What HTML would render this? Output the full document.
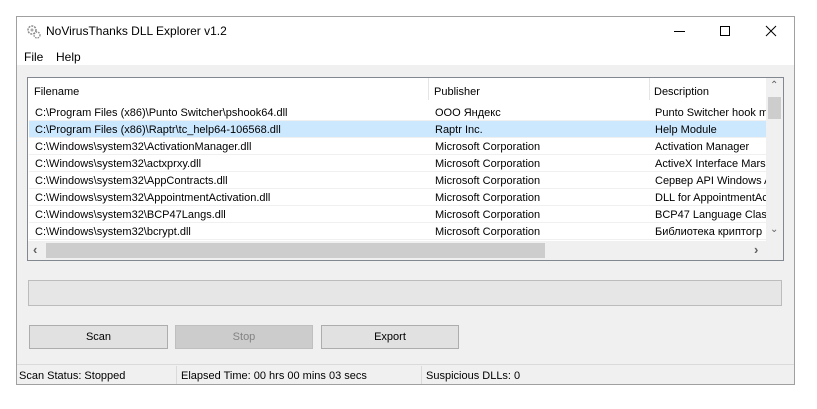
<!DOCTYPE html>
<html><head><style>
*{margin:0;padding:0;box-sizing:border-box}
body{width:817px;height:409px;background:#fff;font-family:"Liberation Sans","Noto Sans CJK SC",sans-serif;font-size:11px;color:#000;position:relative;overflow:hidden}
.a{position:absolute;white-space:nowrap}
.row{position:absolute;left:1px;width:737px;height:17px;border-bottom:1px solid #f0f0f0}
.row span{position:absolute;top:3px}
.btn{position:absolute;top:325px;height:24px;border:1px solid #adadad;background:#e1e1e1;text-align:center;line-height:23px}
</style></head><body>
<div class="a" style="left:16px;top:16px;width:779px;height:369px;border:1px solid #a0a0a0;background:#f0f0f0"></div>
<div class="a" style="left:17px;top:17px;width:777px;height:48px;background:#fff"></div>
<svg class="a" style="left:26px;top:24px" width="16" height="16" viewBox="0 0 16 16"><circle cx="6" cy="6" r="4" fill="none" stroke="#888" stroke-width="1.5" stroke-dasharray="2 1"/><circle cx="6" cy="6" r="1.5" fill="#aaa"/><circle cx="11" cy="11" r="3" fill="none" stroke="#888" stroke-width="1.3" stroke-dasharray="1.5 1"/></svg>
<div class="a" style="left:46px;top:24px;font-size:12px">NoVirusThanks DLL Explorer v1.2</div>
<div class="a" style="left:674px;top:31px;width:11px;height:1px;background:#000"></div>
<div class="a" style="left:720px;top:26px;width:10px;height:10px;border:1px solid #000"></div>
<svg class="a" style="left:765px;top:25px" width="12" height="12"><path d="M1 1L11 11M11 1L1 11" stroke="#000" stroke-width="1"/></svg>
<div class="a" style="left:24px;top:50px;font-size:12px">File</div>
<div class="a" style="left:56px;top:50px;font-size:12px">Help</div>
<div class="a" style="left:27px;top:77px;width:757px;height:184px;border:1px solid #828790;background:#fff;overflow:hidden">
 <div class="a" style="left:6px;top:8px">Filename</div>
 <div class="a" style="left:400px;top:0;width:1px;height:22px;background:#e5e5e5"></div>
 <div class="a" style="left:406px;top:8px">Publisher</div>
 <div class="a" style="left:621px;top:0;width:1px;height:22px;background:#e5e5e5"></div>
 <div class="a" style="left:626px;top:8px">Description</div>
 <div class="row" style="top:26px"><span style="left:6px">C:\Program Files (x86)\Punto Switcher\pshook64.dll</span><span style="left:406px">ООО Яндекс</span><span style="left:626px">Punto Switcher hook mo</span></div>
 <div class="row" style="top:43px;background:#cce8ff"><span style="left:6px">C:\Program Files (x86)\Raptr\tc_help64-106568.dll</span><span style="left:406px">Raptr Inc.</span><span style="left:626px">Help Module</span></div>
 <div class="row" style="top:60px"><span style="left:6px">C:\Windows\system32\ActivationManager.dll</span><span style="left:406px">Microsoft Corporation</span><span style="left:626px">Activation Manager</span></div>
 <div class="row" style="top:77px"><span style="left:6px">C:\Windows\system32\actxprxy.dll</span><span style="left:406px">Microsoft Corporation</span><span style="left:626px">ActiveX Interface Marsh</span></div>
 <div class="row" style="top:94px"><span style="left:6px">C:\Windows\system32\AppContracts.dll</span><span style="left:406px">Microsoft Corporation</span><span style="left:626px">Сервер API Windows A</span></div>
 <div class="row" style="top:111px"><span style="left:6px">C:\Windows\system32\AppointmentActivation.dll</span><span style="left:406px">Microsoft Corporation</span><span style="left:626px">DLL for AppointmentAc</span></div>
 <div class="row" style="top:128px"><span style="left:6px">C:\Windows\system32\BCP47Langs.dll</span><span style="left:406px">Microsoft Corporation</span><span style="left:626px">BCP47 Language Classe</span></div>
 <div class="row" style="top:145px"><span style="left:6px">C:\Windows\system32\bcrypt.dll</span><span style="left:406px">Microsoft Corporation</span><span style="left:626px">Библиотека криптогр</span></div>
 <div class="a" style="left:738px;top:0;width:17px;height:163px;background:#f0f0f0"></div>
 <div class="a" style="left:740px;top:19px;width:13px;height:22px;background:#cdcdcd"></div>
 <div class="a" style="left:742px;top:2px;color:#606060;font-size:10px">&#8963;</div>
 <div class="a" style="left:742px;top:146px;color:#606060;font-size:10px">&#8964;</div>
 <div class="a" style="left:0;top:163px;width:755px;height:19px;background:#f0f0f0"></div>
 <div class="a" style="left:18px;top:165px;width:499px;height:15px;background:#cdcdcd"></div>
 <div class="a" style="left:5px;top:164px;color:#606060;font-size:13px;font-weight:bold">&#8249;</div>
 <div class="a" style="left:726px;top:164px;color:#606060;font-size:13px;font-weight:bold">&#8250;</div>
</div>
<div class="a" style="left:28px;top:280px;width:754px;height:26px;border:1px solid #bcbcbc;background:#e6e6e6"></div>
<div class="btn" style="left:29px;width:139px">Scan</div>
<div class="btn" style="left:175px;width:138px;background:#cccccc;border-color:#bfbfbf;color:#838383">Stop</div>
<div class="btn" style="left:321px;width:138px">Export</div>
<div class="a" style="left:17px;top:364px;width:777px;height:1px;background:#dadada"></div>
<div class="a" style="left:19px;top:370px">Scan Status: Stopped</div>
<div class="a" style="left:176px;top:366px;width:1px;height:18px;background:#dadada"></div>
<div class="a" style="left:181px;top:370px">Elapsed Time: 00 hrs 00 mins 03 secs</div>
<div class="a" style="left:421px;top:366px;width:1px;height:18px;background:#dadada"></div>
<div class="a" style="left:426px;top:370px">Suspicious DLLs: 0</div>
</body></html>
